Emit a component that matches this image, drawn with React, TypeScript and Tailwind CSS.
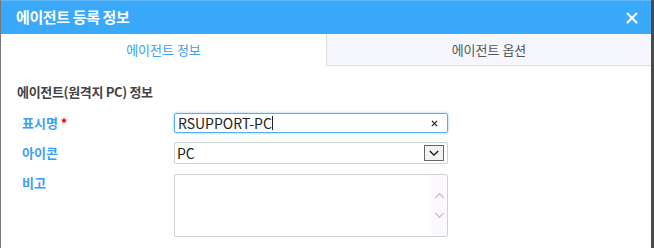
import React from 'react';

const font = { fontFamily: '"Noto Sans CJK KR", "Noto Sans", sans-serif' };

const Chevron = ({ dir, className }: { dir: 'up' | 'down'; className?: string }) => (
    <svg viewBox="0 0 12 8" className={className} fill="none" stroke="currentColor" strokeWidth={1.6}>
        {dir === 'up' ? <path d="M1 7 L6 2 L11 7" /> : <path d="M1 1 L6 6 L11 1" />}
    </svg>
);

export default function App() {
    return (
        <div className="w-[654px] h-[248px] bg-[#4a4a4a] flex overflow-hidden" style={font}>
            <div className="w-[651px] h-full bg-white border-l border-[#777] flex flex-col">
                {/* header */}
                <div className="h-[34px] bg-[#3aa9f9] border-t border-[#62baf8] flex items-center justify-between pl-[15px] pr-[13px]">
                    <span className="text-white text-[15px] font-bold tracking-tight">에이전트 등록 정보</span>
                    <svg viewBox="0 0 12 12" className="w-[12px] h-[12px]" stroke="white" strokeWidth={2.2}>
                        <path d="M1 1 L11 11 M11 1 L1 11" />
                    </svg>
                </div>

                {/* tabs */}
                <div className="flex h-[32px]">
                    <div className="w-[325px] flex items-center justify-center text-[13px] text-[#3aa0f0]">에이전트 정보</div>
                    <div className="flex-1 flex items-center justify-center text-[13px] text-[#555] bg-[#f6f7fe] border-l border-b border-[#dcdce4]">
                        에이전트 옵션
                    </div>
                </div>

                {/* body */}
                <div className="pl-[16px] pt-[17px]">
                    <div className="h-[18px] leading-[18px] text-[13px] font-bold text-[#444] tracking-tight">에이전트(원격지 PC) 정보</div>

                    <div className="flex items-center mt-[12px]">
                        <div className="w-[157px] pl-[5px] text-[13px] font-bold text-[#3ba0f2]">
                            표시명 <span className="text-[#e00]">*</span>
                        </div>
                        <div className="relative w-[274px] h-[20px] border border-[#5aaaf2] rounded-[2px] shadow-[0_0_3px_#8cc8f8] flex items-center pl-[3px]">
                            <span className="text-[14px] text-[#222] leading-none">RSUPPORT-PC</span>
                            <span className="w-px h-[14px] bg-[#222]" />
                            <svg viewBox="0 0 8 8" className="absolute right-[9px] top-[6px] w-[7px] h-[7px]" stroke="#222" strokeWidth={1.4}>
                                <path d="M1 1 L7 7 M7 1 L1 7" />
                            </svg>
                        </div>
                    </div>

                    <div className="flex items-center mt-[9px]">
                        <div className="w-[157px] pl-[5px] text-[13px] font-bold text-[#3ba0f2]">아이콘</div>
                        <div className="w-[274px] h-[22px] border border-[#cfcfd6] rounded-[2px] flex items-center justify-between pl-[2px] pr-[3px]">
                            <span className="text-[14px] text-[#222] leading-none">PC</span>
                            <div className="w-[20px] h-[16px] border border-[#666] bg-[#f2f2f2] flex items-center justify-center">
                                <Chevron dir="down" className="w-[10px] h-[7px] text-[#111]" />
                            </div>
                        </div>
                    </div>

                    <div className="flex items-start mt-[10px]">
                        <div className="w-[157px] pl-[5px] text-[13px] font-bold text-[#3ba0f2] -mt-[1px]">비고</div>
                        <div className="w-[274px] h-[63px] border border-[#cfcfd6] rounded-[2px] flex justify-end">
                            <div className="w-[16px] h-full bg-[#fcf9fc] flex flex-col items-center justify-center gap-[13px]">
                                <Chevron dir="up" className="w-[11px] h-[7px] text-[#c4c4c4]" />
                                <Chevron dir="down" className="w-[11px] h-[7px] text-[#c4c4c4]" />
                            </div>
                        </div>
                    </div>
                </div>
            </div>
        </div>
    );
}
